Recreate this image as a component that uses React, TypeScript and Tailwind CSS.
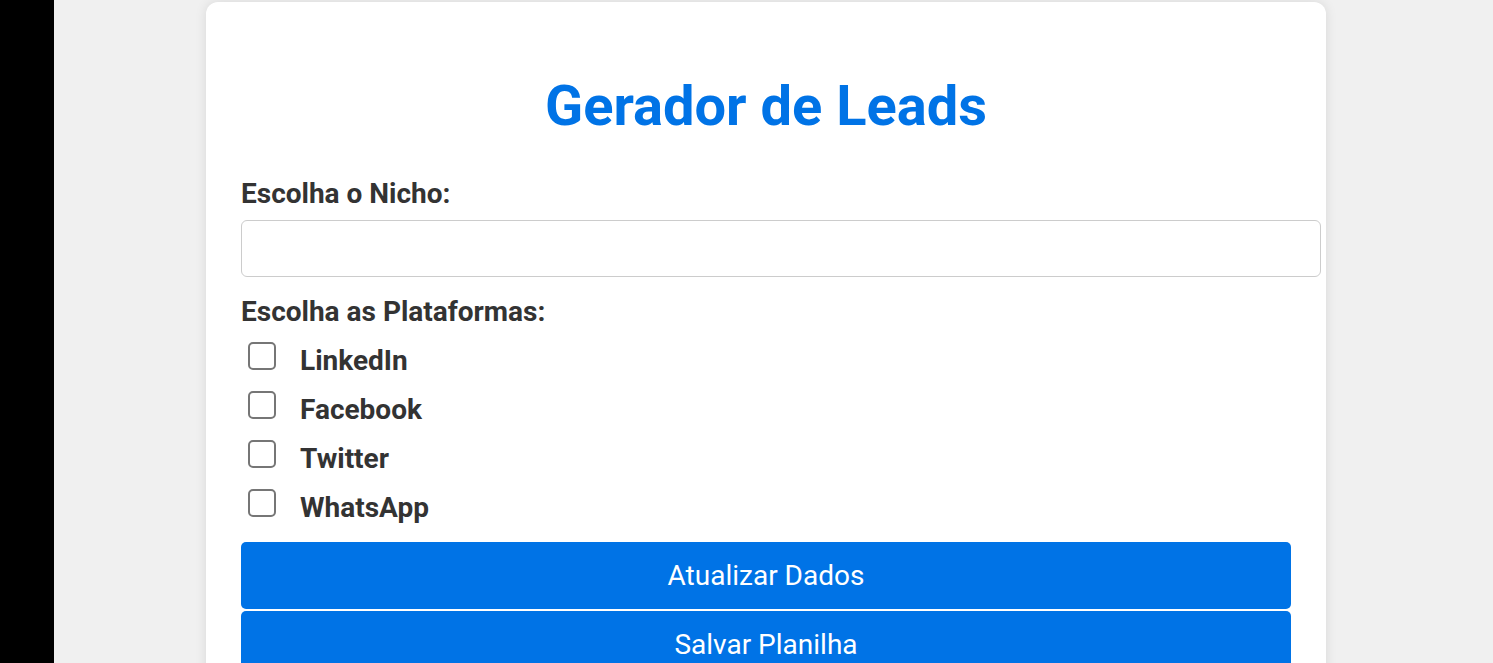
import { useState } from 'react';

const platforms = ['LinkedIn', 'Facebook', 'Twitter', 'WhatsApp'];

export default function App() {
  const [nicho, setNicho] = useState('');
  const [selected, setSelected] = useState<string[]>([]);

  const toggle = (p: string) => {
    setSelected((prev) => (prev.includes(p) ? prev.filter((x) => x !== p) : [...prev, p]));
  };

  return (
    <div
      className="flex h-[663px] overflow-hidden bg-[#f0f0f0]"
      style={{ fontFamily: 'Roboto, "Liberation Sans", sans-serif' }}
    >
      <div className="w-[54px] shrink-0 bg-black" />
      <div className="pl-[152px] pt-[2px]">
        <div className="w-[1120px] rounded-[12px] bg-white px-[35px] pb-[35px] shadow-[0_0_12px_rgba(0,0,0,0.1)]">
          <h1 className="pt-[72px] text-center text-[56px] font-bold leading-[64px] text-[#0073e6]">
            Gerador de Leads
          </h1>

          <label className="mt-[40px] block text-[28px] font-bold leading-[32px] text-[#333]">
            Escolha o Nicho:
          </label>
          <input
            type="text"
            value={nicho}
            onChange={(e) => setNicho(e.target.value)}
            className="mt-[10px] block h-[57px] w-[1080px] rounded-[6px] border border-[#ccc] px-[14px] text-[28px] text-[#333] focus:outline-none"
          />

          <label className="mt-[19px] block text-[28px] font-bold leading-[32px] text-[#333]">
            Escolha as Plataformas:
          </label>
          <div className="mt-[14px] flex flex-col gap-[21px]">
            {platforms.map((p) => (
              <label key={p} className="flex h-[28px] cursor-pointer items-center text-[28px] font-bold text-[#333]">
                <span
                  onClick={() => toggle(p)}
                  className={
                    selected.includes(p)
                      ? 'ml-[7px] mr-[24px] h-[28px] w-[28px] shrink-0 rounded-[5px] border-2 border-[#0073e6] bg-[#0073e6]'
                      : 'ml-[7px] mr-[24px] h-[28px] w-[28px] shrink-0 rounded-[5px] border-2 border-[#767676] bg-white'
                  }
                />
                <span className="mt-[9px]">{p}</span>
              </label>
            ))}
          </div>

          <div className="mt-[25px] flex flex-col gap-[2px]">
            <button className="h-[67px] w-full rounded-[5px] bg-[#0073e6] text-[28px] text-white">
              Atualizar Dados
            </button>
            <button className="h-[67px] w-full rounded-[5px] bg-[#0073e6] text-[28px] text-white">
              Salvar Planilha
            </button>
          </div>
        </div>
      </div>
    </div>
  );
}
